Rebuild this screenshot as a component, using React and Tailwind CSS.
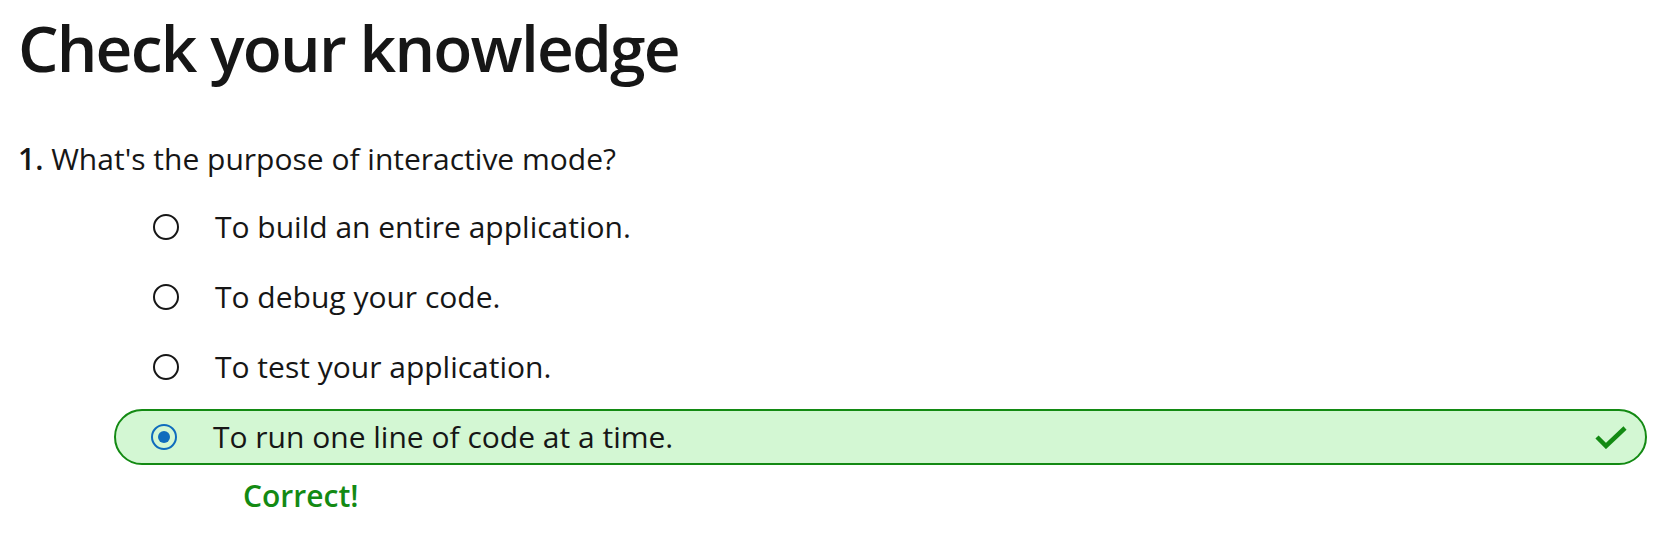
import React from 'react'

const OPTIONS = [
  { text: 'To build an entire application.' },
  { text: 'To debug your code.' },
  { text: 'To test your application.' },
  { text: 'To run one line of code at a time.', selected: true },
]

function Radio({ checked }) {
  if (checked) {
    return (
      <span className="w-[26px] h-[26px] rounded-full border-2 border-[#0f6cbd] flex items-center justify-center shrink-0">
        <span className="w-[12px] h-[12px] rounded-full bg-[#0f6cbd]" />
      </span>
    )
  }
  return <span className="w-[26px] h-[26px] rounded-full border-2 border-[#161616] shrink-0" />
}

function Check() {
  return (
    <svg width="32" height="24" viewBox="0 0 32 24" fill="none" className="shrink-0">
      <path d="M2 12 L11 21 L30 3" stroke="#138a13" strokeWidth="4.5" strokeLinejoin="miter" />
    </svg>
  )
}

export default function App() {
  return (
    <div className="bg-white text-[#161616] min-h-[534px] pl-[18px] pr-[21px] font-['Segoe_UI','Open_Sans','Noto_Sans',sans-serif]">
      <h2 className="text-[64px] font-semibold leading-none pt-[16px] tracking-[-1.8px]">Check your knowledge</h2>

      <p className="text-[30px] leading-[40px] mt-[59px]">
        <span className="font-semibold">1.</span> What's the purpose of interactive mode?
      </p>

      <div className="ml-[96px] mt-[20px] flex flex-col gap-[14px]">
        {OPTIONS.map((o) => (
          <div
            key={o.text}
            className={
              o.selected
                ? 'h-[56px] flex items-center pl-[35px] pr-[18px] rounded-full border-2 border-[#138a13] bg-[#d3f7d3]'
                : 'h-[56px] flex items-center pl-[37px] pr-[18px] border-2 border-transparent'
            }
          >
            <Radio checked={o.selected} />
            <span className="ml-[36px] text-[30px] leading-none flex-1">{o.text}</span>
            {o.selected && <Check />}
          </div>
        ))}
        <div className="pl-[129px] -mt-[3px] text-[30px] font-semibold text-[#138a13] leading-[40px]">Correct!</div>
      </div>
    </div>
  )
}
